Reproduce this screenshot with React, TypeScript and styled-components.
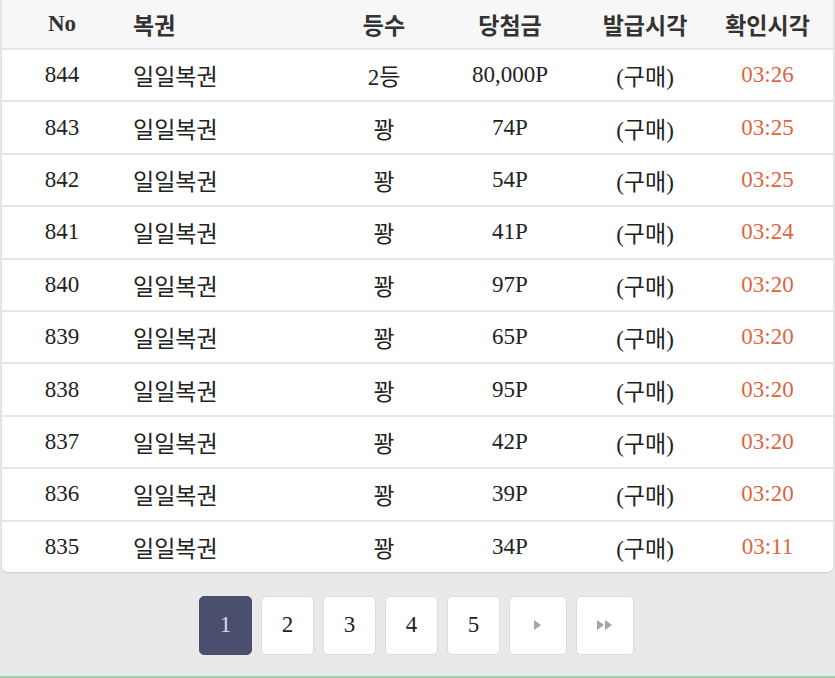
import styled, { createGlobalStyle } from 'styled-components';

const GlobalStyle = createGlobalStyle`
  html, body { margin: 0; padding: 0; background: #e9e9e9; }
  body { font-family: "Liberation Serif", "Noto Sans CJK KR", serif; color: #222; }
`;

const Page = styled.div`
  width: 835px;
  height: 678px;
  box-sizing: border-box;
  border-bottom: 2px solid #9fd3a5;
  overflow: hidden;
`;

const Card = styled.div`
  margin: 0 2px;
  background: #fff;
  border-radius: 0 0 6px 6px;
  box-shadow: 0 1px 2px rgba(0, 0, 0, 0.15);
  overflow: hidden;
`;

const Row = styled.div<{ $head?: boolean }>`
  display: grid;
  grid-template-columns: 120px 200px 124px 128px 142px 1fr;
  padding-right: 14px;
  align-items: center;
  height: ${(p) => (p.$head ? '48px' : '52.4px')};
  background: ${(p) => (p.$head ? '#f7f7f7' : '#fff')};
  border-top: ${(p) => (p.$head ? 'none' : '2px solid #e6e6e6')};
  box-sizing: border-box;
  font-size: 23px;
  font-weight: ${(p) => (p.$head ? 700 : 400)};
  color: ${(p) => (p.$head ? '#333' : '#222')};
`;

const Cell = styled.div<{ $left?: boolean; $red?: boolean }>`
  text-align: ${(p) => (p.$left ? 'left' : 'center')};
  padding-left: ${(p) => (p.$left ? '11px' : '0')};
  color: ${(p) => (p.$red ? '#e0643f' : 'inherit')};
  white-space: nowrap;
`;

const Pager = styled.div`
  display: flex;
  justify-content: center;
  gap: 9px;
  padding-top: 24px;
  padding-right: 2px;
`;

const PageButton = styled.div<{ $active?: boolean; $wide?: boolean }>`
  width: ${(p) => (p.$wide ? '58px' : '53px')};
  height: 59px;
  box-sizing: border-box;
  border-radius: 5px;
  display: flex;
  align-items: center;
  justify-content: center;
  font-size: 23px;
  background: ${(p) => (p.$active ? '#4b4f6e' : '#fff')};
  color: ${(p) => (p.$active ? '#d8d9e3' : '#222')};
  border: 1px solid ${(p) => (p.$active ? '#4b4f6e' : '#dcdcdc')};
`;

const rows = [
  ['844', '2등', '80,000P', '03:26'],
  ['843', '꽝', '74P', '03:25'],
  ['842', '꽝', '54P', '03:25'],
  ['841', '꽝', '41P', '03:24'],
  ['840', '꽝', '97P', '03:20'],
  ['839', '꽝', '65P', '03:20'],
  ['838', '꽝', '95P', '03:20'],
  ['837', '꽝', '42P', '03:20'],
  ['836', '꽝', '39P', '03:20'],
  ['835', '꽝', '34P', '03:11'],
];

const Tri = ({ n }: { n: number }) => (
  <svg width={n * 8} height="12" viewBox={`0 0 ${n * 8} 12`}>
    {Array.from({ length: n }).map((_, i) => (
      <polygon key={i} points={`${i * 8},1 ${i * 8 + 7},6 ${i * 8},11`} fill="#a5a5a5" />
    ))}
  </svg>
);

export default function App() {
  return (
    <Page>
      <GlobalStyle />
      <Card>
        <Row $head>
          <Cell>No</Cell>
          <Cell $left>복권</Cell>
          <Cell>등수</Cell>
          <Cell>당첨금</Cell>
          <Cell>발급시각</Cell>
          <Cell>확인시각</Cell>
        </Row>
        {rows.map(([no, rank, prize, time]) => (
          <Row key={no}>
            <Cell>{no}</Cell>
            <Cell $left>일일복권</Cell>
            <Cell>{rank}</Cell>
            <Cell>{prize}</Cell>
            <Cell>(구매)</Cell>
            <Cell $red>{time}</Cell>
          </Row>
        ))}
      </Card>
      <Pager>
        <PageButton $active>1</PageButton>
        <PageButton>2</PageButton>
        <PageButton>3</PageButton>
        <PageButton>4</PageButton>
        <PageButton>5</PageButton>
        <PageButton $wide><Tri n={1} /></PageButton>
        <PageButton $wide><Tri n={2} /></PageButton>
      </Pager>
    </Page>
  );
}
